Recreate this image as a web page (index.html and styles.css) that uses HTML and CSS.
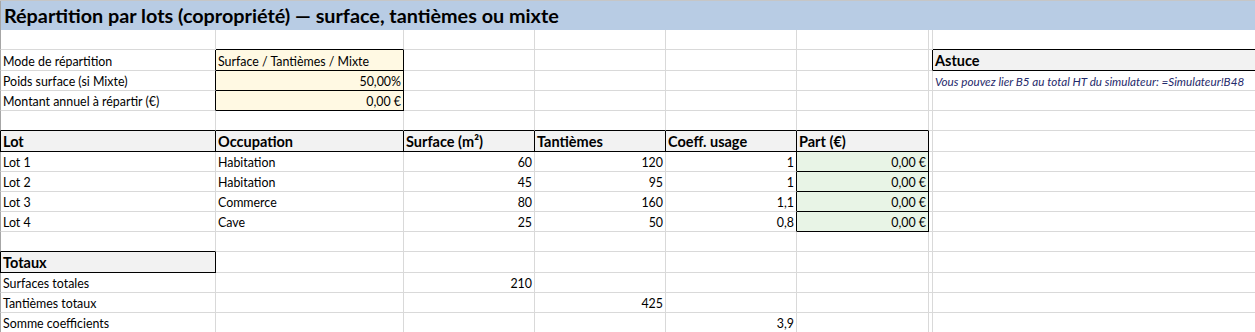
FILE: index.html
```html
<!DOCTYPE html>
<html lang="fr">
<head>
    <meta charset="UTF-8">
    <meta name="viewport" content="width=device-width, initial-scale=1.0">
    <title>Répartition par lots</title>
    <link rel="stylesheet" href="styles.css">
</head>
<body>
    <table class="sheet">
        <colgroup>
            <col class="col-a">
            <col class="col-b">
            <col class="col-c">
            <col class="col-d">
            <col class="col-e">
            <col class="col-f">
            <col class="col-g">
            <col class="col-h">
        </colgroup>

        <tr class="row-title">
            <td colspan="8" class="title">Répartition par lots (copropriété) — surface, tantièmes ou mixte</td>
        </tr>

        <tr class="row">
            <td></td>
            <td class="box-top"></td>
            <td></td><td></td><td></td><td></td><td></td>
            <td class="box-top"></td>
        </tr>
        <tr class="row tall">
            <td class="box-before">Mode de répartition</td>
            <td class="input">Surface / Tantièmes / Mixte</td>
            <td></td><td></td><td></td><td></td>
            <td class="box-before"></td>
            <td class="note-head">Astuce</td>
        </tr>
        <tr class="row">
            <td class="box-before">Poids surface (si Mixte)</td>
            <td class="input num">50,00%</td>
            <td></td><td></td><td></td><td></td><td></td>
            <td class="note">Vous pouvez lier B5 au total HT du simulateur: =Simulateur!B48</td>
        </tr>
        <tr class="row">
            <td class="box-before">Montant annuel à répartir (€)</td>
            <td class="input num">0,00 €</td>
            <td></td><td></td><td></td><td></td><td></td><td></td>
        </tr>
        <tr class="row">
            <td class="box-top"></td>
            <td class="box-top"></td>
            <td class="box-top"></td>
            <td class="box-top"></td>
            <td class="box-top"></td>
            <td class="box-top"></td>
            <td></td><td></td>
        </tr>

        <tr class="row tall">
            <th class="head first">Lot</th>
            <th class="head">Occupation</th>
            <th class="head">Surface (m²)</th>
            <th class="head">Tantièmes</th>
            <th class="head">Coeff. usage</th>
            <th class="head">Part (€)</th>
            <td></td><td></td>
        </tr>
        <tr class="row">
            <td>Lot 1</td><td>Habitation</td>
            <td class="num">60</td><td class="num">120</td>
            <td class="num box-before">1</td><td class="num share">0,00 €</td>
            <td></td><td></td>
        </tr>
        <tr class="row">
            <td>Lot 2</td><td>Habitation</td>
            <td class="num">45</td><td class="num">95</td>
            <td class="num box-before">1</td><td class="num share">0,00 €</td>
            <td></td><td></td>
        </tr>
        <tr class="row">
            <td>Lot 3</td><td>Commerce</td>
            <td class="num">80</td><td class="num">160</td>
            <td class="num box-before">1,1</td><td class="num share">0,00 €</td>
            <td></td><td></td>
        </tr>
        <tr class="row">
            <td>Lot 4</td><td>Cave</td>
            <td class="num">25</td><td class="num">50</td>
            <td class="num box-before">0,8</td><td class="num share">0,00 €</td>
            <td></td><td></td>
        </tr>

        <tr class="row">
            <td class="box-top"></td>
            <td></td><td></td><td></td><td></td><td></td><td></td><td></td>
        </tr>
        <tr class="row tall">
            <th class="head first">Totaux</th>
            <td></td><td></td><td></td><td></td><td></td><td></td><td></td>
        </tr>
        <tr class="row">
            <td>Surfaces totales</td><td></td>
            <td class="num">210</td>
            <td></td><td></td><td></td><td></td><td></td>
        </tr>
        <tr class="row">
            <td>Tantièmes totaux</td><td></td><td></td>
            <td class="num">425</td>
            <td></td><td></td><td></td><td></td>
        </tr>
        <tr class="row">
            <td>Somme coefficients</td><td></td><td></td><td></td>
            <td class="num">3,9</td>
            <td></td><td></td><td></td>
        </tr>
    </table>
</body>
</html>
```

FILE: styles.css
```css
body {
    margin: 0;
    padding: 0;
    background-color: #fff;
    overflow: hidden;
    font-family: Lato, "Open Sans", sans-serif;
    color: #000;
}

.sheet {
    border-collapse: separate;
    border-spacing: 0;
    table-layout: fixed;
    width: 1270px;
    border-top: 1px solid #c6c6c6;
}

.col-a { width: 216px; }
.col-b { width: 188px; }
.col-c { width: 131px; }
.col-d { width: 131px; }
.col-e { width: 131px; }
.col-f { width: 132px; }
.col-g { width: 4px; }
.col-h { width: 337px; }

td, th {
    box-sizing: border-box;
    padding: 0 2px 1px 2px;
    border-right: 1px solid #d9d9d9;
    border-bottom: 1px solid #d9d9d9;
    font-size: 12.4px;
    font-weight: normal;
    text-align: left;
    vertical-align: bottom;
    white-space: nowrap;
    overflow: hidden;
    line-height: 15px;
}

tr td:first-child,
tr th:first-child {
    border-left: 1px solid #a6a6a6;
}

.row td, .row th {
    height: 20px;
}

.row.tall td, .row.tall th {
    height: 21px;
}

/* bandeau titre */
.row-title td {
    height: 29px;
    background-color: #b8cce4;
    border-right: none;
    border-bottom: none;
    font-size: 19.8px;
    font-weight: 700;
    color: #000;
    padding: 0 3px 3px 3px;
    line-height: 24px;
}

.num {
    text-align: right;
}

/* bordures noires des blocs */
.box-top {
    border-bottom-color: #000 !important;
}

.box-before {
    border-right-color: #000 !important;
}

.input {
    background-color: #fff9e3;
    border-right-color: #000;
    border-bottom-color: #000;
}

.head {
    background-color: #f2f2f2;
    font-weight: 700;
    font-size: 14.5px;
    border-right-color: #000;
    border-bottom-color: #000;
    padding-bottom: 1px;
    line-height: 17px;
}

.head.first {
    border-left-color: #000;
}

.share {
    background-color: #e8f4e6;
    border-right-color: #000;
    border-bottom-color: #000;
}

.note-head {
    background-color: #f2f2f2;
    font-weight: 700;
    font-size: 14.5px;
    border-bottom-color: #000;
    border-right: none;
    padding-bottom: 1px;
    line-height: 17px;
}

.note {
    font-style: italic;
    font-size: 11.7px;
    color: #1f2a6b;
}
```
